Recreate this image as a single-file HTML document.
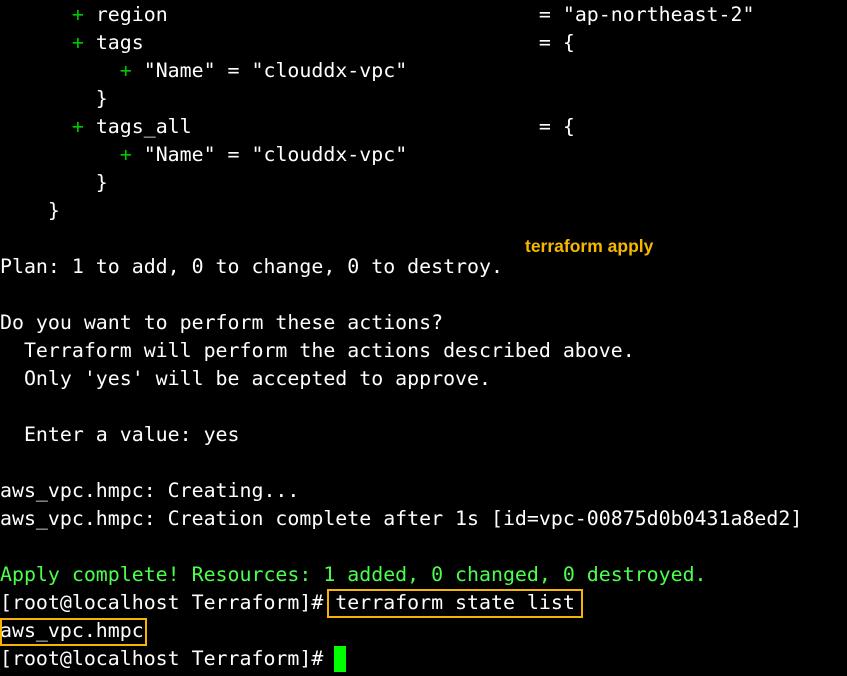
<!DOCTYPE html>
<html><head><meta charset="utf-8"><style>
html,body{margin:0;padding:0;background:#000;width:847px;height:676px;overflow:hidden}
pre{margin:0;position:absolute;left:0;top:1px;font-family:"DejaVu Sans Mono","Liberation Mono",monospace;font-size:19.9px;line-height:28px;color:#fff;white-space:pre}
.g{color:#00c800}
.a{color:#4dff4d}
.box{position:absolute;border:2px solid #f5b400;box-sizing:border-box}
.ann{position:absolute;left:525px;top:236px;color:#f5b800;font-family:"Liberation Sans","Noto Sans CJK KR",sans-serif;font-weight:bold;font-size:17.5px}
.cur{position:absolute;left:334px;top:646px;width:12px;height:26px;background:#00ff00}
</style></head><body>
<pre>      <span class="g">+</span> region                               = "ap-northeast-2"
      <span class="g">+</span> tags                                 = {
          <span class="g">+</span> "Name" = "clouddx-vpc"
        }
      <span class="g">+</span> tags_all                             = {
          <span class="g">+</span> "Name" = "clouddx-vpc"
        }
    }

Plan: 1 to add, 0 to change, 0 to destroy.

Do you want to perform these actions?
  Terraform will perform the actions described above.
  Only 'yes' will be accepted to approve.

  Enter a value: yes

aws_vpc.hmpc: Creating...
aws_vpc.hmpc: Creation complete after 1s [id=vpc-00875d0b0431a8ed2]

<span class="a">Apply complete! Resources: 1 added, 0 changed, 0 destroyed.</span>
[root@localhost Terraform]# terraform state list
aws_vpc.hmpc
[root@localhost Terraform]# </pre>
<div class="ann">terraform apply</div>
<div class="box" style="left:327px;top:589px;width:256px;height:29px"></div>
<div class="box" style="left:0;top:618px;width:147px;height:28px"></div>
<div class="cur"></div>
</body></html>
